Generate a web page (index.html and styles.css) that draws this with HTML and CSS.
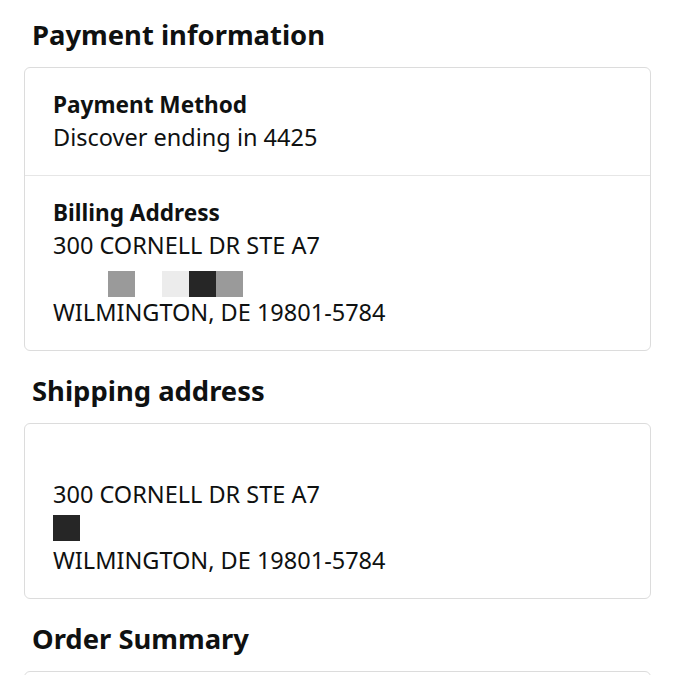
FILE: index.html
```html
<!DOCTYPE html>
<html lang="en">
<head>
    <meta charset="UTF-8">
    <meta name="viewport" content="width=device-width, initial-scale=1.0">
    <title>Order Details</title>
    <link rel="stylesheet" href="styles.css">
</head>
<body>
    <div class="page">
        <h2 class="section-title">Payment information</h2>
        <div class="card">
            <div class="card-row">
                <div class="label">Payment Method</div>
                <div class="line">Discover ending in 4425</div>
            </div>
            <div class="card-row">
                <div class="label">Billing Address</div>
                <div class="line">300 CORNELL DR STE A7</div>
                <div class="line redacted tall">
                    <span class="blot gap wide"></span>
                    <span class="blot mid"></span>
                    <span class="blot gap"></span>
                    <span class="blot light"></span>
                    <span class="blot dark"></span>
                    <span class="blot mid"></span>
                </div>
                <div class="line">WILMINGTON, DE 19801-5784</div>
            </div>
        </div>

        <h2 class="section-title">Shipping address</h2>
        <div class="card">
            <div class="card-row">
                <div class="line">&nbsp;</div>
                <div class="line">300 CORNELL DR STE A7</div>
                <div class="line redacted">
                    <span class="blot dark"></span>
                </div>
                <div class="line">WILMINGTON, DE 19801-5784</div>
            </div>
        </div>

        <h2 class="section-title">Order Summary</h2>
        <div class="card">
            <div class="card-row"></div>
        </div>
    </div>
</body>
</html>
```

FILE: styles.css
```css
body {
    font-family: "Noto Sans", "Open Sans", sans-serif;
    background-color: #fff;
    color: #0f1111;
    margin: 0;
}

.page {
    padding: 17px 24px 0 24px;
}

.section-title {
    font-size: 27.4px;
    font-weight: 700;
    line-height: 36px;
    margin: 0 0 14px 8px;
}

.card {
    border: 1px solid #dcdcdc;
    border-radius: 6px;
    margin-bottom: 22px;
}

.card-row {
    padding: 21px 28px;
    border-top: 1px solid #e6e6e6;
}

.card-row:first-child {
    border-top: none;
}

.label {
    font-size: 22.6px;
    font-weight: 700;
    line-height: 32px;
}

.line {
    font-size: 23.5px;
    line-height: 33px;
}

.redacted {
    display: flex;
    align-items: center;
    height: 33px;
}

.redacted.tall {
    height: 34px;
    align-items: flex-end;
}

.redacted.tall .blot {
    margin-bottom: -1px;
}

.blot {
    display: inline-block;
    width: 27px;
    height: 26px;
}

.blot.gap { background: transparent; }
.blot.gap.wide { width: 55px; }
.blot.mid { background: #9a9a9a; }
.blot.light { background: #ececec; }
.blot.dark { background: #262626; }
```
